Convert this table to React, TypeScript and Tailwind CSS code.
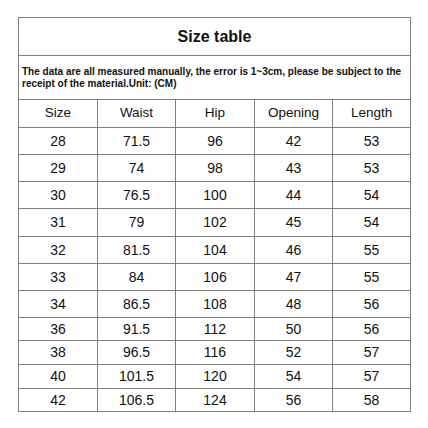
const headers = ["Size", "Waist", "Hip", "Opening", "Length"];

const rows: [string, string, string, string, string, number][] = [
  ["28", "71.5", "96", "42", "53", 27],
  ["29", "74", "98", "43", "53", 27],
  ["30", "76.5", "100", "44", "54", 27],
  ["31", "79", "102", "45", "54", 28],
  ["32", "81.5", "104", "46", "55", 27],
  ["33", "84", "106", "47", "55", 27],
  ["34", "86.5", "108", "48", "56", 27],
  ["36", "91.5", "112", "50", "56", 23],
  ["38", "96.5", "116", "52", "57", 24],
  ["40", "101.5", "120", "54", "57", 24],
  ["42", "106.5", "124", "56", "58", 23],
];

const rowHeight: Record<number, string> = {
  23: "h-[23px]",
  24: "h-[24px]",
  27: "h-[27px]",
  28: "h-[28px]",
};

const cell = "border border-[#7f7f7f] p-0 text-center align-middle";

export default function App() {
  return (
    <div className="min-h-[428px] w-[428px] bg-white pl-[18px] pt-[17px] font-['Liberation_Sans',Arial,sans-serif] text-[#111]">
      <table className="w-[393px] table-fixed border-collapse">
        <colgroup>
          <col className="w-[79px]" />
          <col className="w-[78px]" />
          <col className="w-[79px]" />
          <col className="w-[78px]" />
          <col className="w-[78px]" />
        </colgroup>
        <tbody>
          <tr className="h-[38px]">
            <td colSpan={5} className={`${cell} text-[16px] font-bold`}>
              Size table
            </td>
          </tr>
          <tr className="h-[44px]">
            <td
              colSpan={5}
              className="border border-[#7f7f7f] py-0 pl-[3px] pr-0 text-left align-middle text-[10px] font-bold leading-[12px]"
            >
              The data are all measured manually, the error is 1~3cm, please be
              subject to the receipt of the material.Unit: (CM)
            </td>
          </tr>
          <tr className="h-[28px]">
            {headers.map((h) => (
              <td key={h} className={`${cell} text-[13.5px]`}>
                {h}
              </td>
            ))}
          </tr>
          {rows.map((r) => (
            <tr key={r[0]} className={rowHeight[r[5]]}>
              {r.slice(0, 5).map((v, i) => (
                <td key={i} className={`${cell} text-[14px]`}>
                  {v}
                </td>
              ))}
            </tr>
          ))}
        </tbody>
      </table>
    </div>
  );
}
